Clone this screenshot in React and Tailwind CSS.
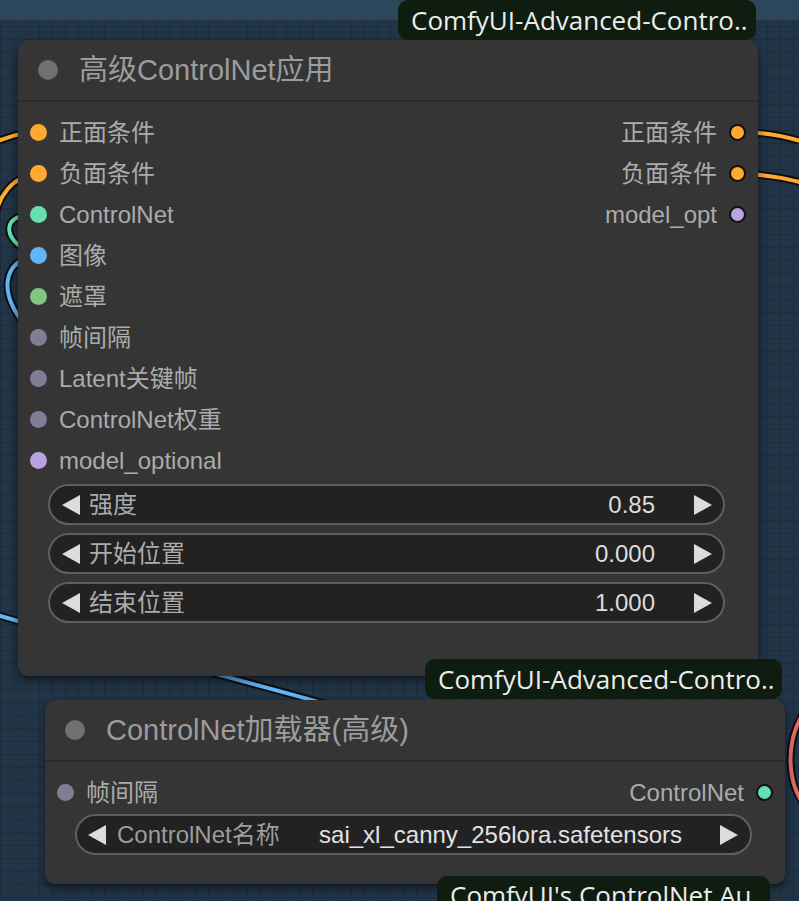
import React from "react";

const sans = "font-['Liberation_Sans','Noto_Sans_CJK_SC',sans-serif]";

// slot colours by type
const slotColor = {
  cond: "bg-[#ffa931]",
  cnet: "bg-[#66e0b2]",
  image: "bg-[#64b5f6]",
  mask: "bg-[#81c784]",
  int: "bg-[#807e94]",
  model: "bg-[#b8a2e0]",
};

function Dot({ type, outlined }) {
  return (
    <span
      className={`block w-[17px] h-[17px] shrink-0 rounded-full ${slotColor[type]} ${
        outlined ? "border-2 border-[#111]" : ""
      }`}
    />
  );
}

function LeftArrow() {
  return (
    <svg width="18" height="20" viewBox="0 0 18 20" className="shrink-0">
      <polygon points="18,0 18,20 0,10" fill="#dcdcdc" />
    </svg>
  );
}

function RightArrow() {
  return (
    <svg width="18" height="20" viewBox="0 0 18 20" className="shrink-0">
      <polygon points="0,0 0,20 18,10" fill="#dcdcdc" />
    </svg>
  );
}

function SlotRow({ input, output }) {
  return (
    <div className="h-[41px] flex items-center justify-between">
      <div className="flex items-center gap-[12px] pl-[12px]">
        {input && <Dot type={input.type} />}
        {input && <span className="text-[24px] text-[#ababab] leading-none">{input.label}</span>}
      </div>
      {output && (
        <div className="flex items-center gap-[12px] pr-[12px]">
          <span className="text-[24px] text-[#ababab] leading-none">{output.label}</span>
          <Dot type={output.type} outlined />
        </div>
      )}
    </div>
  );
}

function NumberWidget({ label, value }) {
  return (
    <div className="h-[41px] ml-[30px] mr-[33px] rounded-full bg-[#222] border-2 border-[#5f5f5f] flex items-center pl-[12px] pr-[11px]">
      <LeftArrow />
      <span className="ml-[9px] text-[24px] text-[#ababab] leading-none">{label}</span>
      <span className="ml-auto text-[24px] text-[#dcdcdc] leading-none">{value}</span>
      <span className="ml-[39px]">
        <RightArrow />
      </span>
    </div>
  );
}

function Badge({ text, className }) {
  return (
    <div
      className={`absolute h-[40px] rounded-[10px] bg-[#0f1c10] flex items-center pl-[13px] overflow-hidden font-['Open_Sans',sans-serif] text-[26px] text-[#ececec] whitespace-nowrap leading-none ${className}`}
    >
      {text}
    </div>
  );
}

function NodeTitle({ title }) {
  return (
    <div className="h-[62px] border-b-2 border-[#2a2a2a] flex items-center pl-[20px]">
      <span className="block w-5 h-5 rounded-full bg-[#707070]" />
      <span className="ml-[21px] text-[29px] text-[#9c9c9c] leading-none">{title}</span>
    </div>
  );
}

const inputs = [
  { label: "正面条件", type: "cond" },
  { label: "负面条件", type: "cond" },
  { label: "ControlNet", type: "cnet" },
  { label: "图像", type: "image" },
  { label: "遮罩", type: "mask" },
  { label: "帧间隔", type: "int" },
  { label: "Latent关键帧", type: "int" },
  { label: "ControlNet权重", type: "int" },
  { label: "model_optional", type: "model" },
];

const outputs = [
  { label: "正面条件", type: "cond" },
  { label: "负面条件", type: "cond" },
  { label: "model_opt", type: "model" },
];

function Wire({ d, color }) {
  return (
    <g fill="none" strokeLinecap="round">
      <path d={d} stroke="#0b0f14" strokeWidth="8" />
      <path d={d} stroke={color} strokeWidth="4" />
    </g>
  );
}

export default function App() {
  return (
    <div
      className={`relative w-[799px] h-[901px] overflow-hidden bg-[#213547] bg-[linear-gradient(rgba(0,0,0,0.14)_1px,transparent_1px),linear-gradient(90deg,rgba(0,0,0,0.14)_1px,transparent_1px)] bg-[size:13px_13px] ${sans}`}
    >
      {/* lighter strip along the top of the canvas */}
      <div className="h-[20px] bg-[#2c465b]" />

      {/* links */}
      <svg className="absolute inset-0" width="799" height="901">
        <Wire d="M -20 146 C 0 142, 12 133, 38 132" color="#ffa931" />
        <Wire d="M -6 222 C -2 196, 12 176, 38 174" color="#ffa931" />
        <Wire d="M 38 215 C 0 212, 2 240, 30 252" color="#66e0b2" />
        <Wire d="M 38 256 C 2 258, -4 296, 30 330" color="#64b5f6" />
        <Wire d="M -20 610 C 80 640, 200 668, 340 708" color="#64b5f6" />
        <Wire d="M 738 132 C 770 132, 790 137, 830 150" color="#ffa931" />
        <Wire d="M 738 174 C 770 174, 790 179, 830 190" color="#ffa931" />
        <Wire d="M 804 712 C 786 740, 786 780, 804 805" color="#e06a60" />
      </svg>

      {/* 高级ControlNet应用 */}
      <div className="absolute left-[18px] top-[40px] w-[740px] h-[636px] rounded-[10px] bg-[#353535] shadow-[0_4px_10px_rgba(0,0,0,0.55)]">
        <NodeTitle title="高级ControlNet应用" />
        <div className="pt-[10px]">
          {inputs.map((inp, i) => (
            <SlotRow key={i} input={inp} output={outputs[i]} />
          ))}
        </div>
        <div className="mt-[3px] flex flex-col gap-[8px]">
          <NumberWidget label="强度" value="0.85" />
          <NumberWidget label="开始位置" value="0.000" />
          <NumberWidget label="结束位置" value="1.000" />
        </div>
      </div>
      <Badge text="ComfyUI-Advanced-Contro.." className="left-[398px] top-0 w-[358px]" />

      {/* ControlNet加载器(高级) */}
      <div className="absolute left-[45px] top-[700px] w-[740px] h-[184px] rounded-[10px] bg-[#353535] shadow-[0_4px_10px_rgba(0,0,0,0.55)]">
        <NodeTitle title="ControlNet加载器(高级)" />
        <div className="pt-[10px]">
          <SlotRow input={{ label: "帧间隔", type: "int" }} output={{ label: "ControlNet", type: "cnet" }} />
        </div>
        <div className="mt-[1px] h-[41px] ml-[30px] mr-[33px] rounded-full bg-[#222] border-2 border-[#5f5f5f] flex items-center pl-[11px] pr-[12px]">
          <LeftArrow />
          <span className="ml-[11px] text-[24px] text-[#9c9c9c] leading-none">ControlNet名称</span>
          <span className="ml-auto text-[24px] text-[#e2e2e2] leading-none">sai_xl_canny_256lora.safetensors</span>
          <span className="ml-[38px]">
            <RightArrow />
          </span>
        </div>
      </div>
      <Badge text="ComfyUI-Advanced-Contro.." className="left-[425px] top-[659px] w-[357px]" />
      <Badge text="ComfyUI's ControlNet Au.." className="left-[437px] top-[876px] w-[333px] items-start pt-[6px]" />
    </div>
  );
}
